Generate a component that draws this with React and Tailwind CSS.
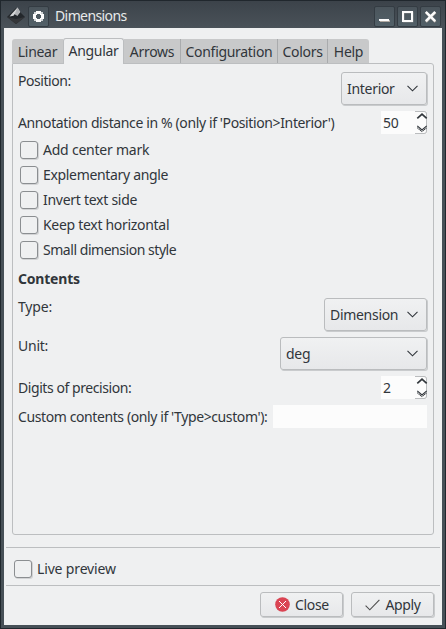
const TABS = [
  ['Linear', 'w-[51px] rounded-tl-[3px]'],
  ['Angular', 'w-[61px]'],
  ['Arrows', 'w-[57px]'],
  ['Configuration', 'w-[97px]'],
  ['Colors', 'w-[50px]'],
  ['Help', 'w-[41px] rounded-tr-[3px]'],
];

const CHECKS = [
  ['Add center mark', 'tracking-[-0.23px]'],
  ['Explementary angle', 'tracking-[-0.33px]'],
  ['Invert text side', 'tracking-[-0.27px]'],
  ['Keep text horizontal', 'tracking-[-0.3px]'],
  ['Small dimension style', 'tracking-[-0.46px]'],
];

const FACE = 'border border-[#babcbe] rounded-[3px] bg-linear-to-b from-[#f0f1f2] to-[#e7e8ea] shadow-[1px_1px_0_#c9cbcd]';

function Tabs() {
  return (
    <div className="flex h-[26px] items-end relative z-10 -mb-px tracking-[-0.3px]">
      {TABS.map(([name, cls], i) =>
        name === 'Angular' ? (
          <div key={name} className={`${cls} h-[26px] pb-px flex items-center justify-center bg-[#eff0f1] border border-b-0 border-[#bcbec0] rounded-t-[3px]`}>
            {name}
          </div>
        ) : (
          <div key={name} className={`${cls} h-[24px] mb-px pt-[2px] flex items-center justify-center bg-[#c8c9ca] ${i > 1 && i < 5 ? 'border-r border-[#a9abad]' : ''}`}>
            {name}
          </div>
        )
      )}
    </div>
  );
}

function Check({ label, tracking }) {
  return (
    <div className="flex items-center h-[19px] gap-[5px]">
      <div className="w-[18px] h-[18px] shrink-0 border border-[#8b8e91] rounded-[3px] bg-[#eff0f1] shadow-[1px_1px_0_#d2d3d5]" />
      <span className={tracking}>{label}</span>
    </div>
  );
}

function Row({ label, children, top, tracking }) {
  return (
    <div className={`flex justify-between ${top ? 'items-start' : 'items-center'}`}>
      <span className={`leading-[18px] ${tracking}`}>{label}</span>
      {children}
    </div>
  );
}

function Select({ value, width }) {
  return (
    <div className={`${width} h-[33px] pl-[5px] pr-[8px] flex items-center justify-between tracking-[-0.3px] ${FACE}`}>
      <span>{value}</span>
      <svg width="11" height="7" viewBox="0 0 11 7" fill="none" stroke="#31363b" strokeWidth="1.1">
        <path d="M.5 .8 5.5 5.8 10.5 .8" />
      </svg>
    </div>
  );
}

function Spin({ value }) {
  return (
    <div className="flex w-[46px] h-[23px] bg-[#fcfcfc]">
      <span className="w-[34px] pl-[2px] leading-[24px] tracking-[-0.2px]">{value}</span>
      <div className="w-[12px] h-[23px] border border-l-0 border-[#babcbe] rounded-r-[3px]">
        <svg className="overflow-visible" width="12" height="21" viewBox="0 0 12 21" fill="none" stroke="#31363b" strokeWidth="1.7">
          <path d="M2.3 6.4 7 2.2 11.7 6.4" />
          <path d="M2.3 13.8 7 18 11.7 13.8" strokeWidth="1.1" />
          <path d="M2.3 15.6 7 19.6 11.7 15.6" strokeWidth="1.1" strokeDasharray="1.2 .6" />
        </svg>
      </div>
    </div>
  );
}

function TitleButton({ children }) {
  return (
    <div className="w-[21px] h-[21px] border border-[#343c43] rounded-[2px] bg-linear-to-b from-[#4b555c] to-[#526068] flex items-center justify-center">
      {children}
    </div>
  );
}

function TitleBar() {
  return (
    <div className="h-[28px] border-t border-[#20272d] bg-linear-to-b from-[#3c434a] to-[#4a5259] flex items-center pt-[3px] pl-[6px] pr-[4px]">
      <svg width="18" height="18" viewBox="0 0 18 18">
        <path d="M9 1 18 10 9 17 0 10Z" fill="#23272b" />
        <path d="M0 10 9 12 18 10 9 17Z" fill="#343639" />
        <path d="M10.5 .5 5 6.5 2.6 9.6 6.5 8.8 7.8 6.9 10.3 8.8 13.2 5Z" fill="#d5d6d7" />
        <path d="M10.5 .5 7.8 6.9 10.3 8.8 13.2 5Z" fill="#b1b3b5" />
      </svg>
      <div className="ml-[3px]">
        <TitleButton>
          <svg width="13" height="13" viewBox="0 0 13 13" fill="none">
            <path d="M4 1H9V2H11V4H12V9H11V11H9V12H4V11H2V9H1V4H2V2H4ZM5 4V5H4V8H5V9H8V8H9V5H8V4Z" fill="#fcfcfc" fillRule="evenodd" />
            <path d="M2 2H4V4H2ZM9 2H11V4H9ZM2 9H4V11H2ZM9 9H11V11H9Z" fill="#d0d4d6" />
          </svg>
        </TitleButton>
      </div>
      <span className="ml-[6px] text-[#e8eaeb] leading-[18px] tracking-[-0.6px]">Dimensions</span>
      <div className="ml-auto flex gap-[2px]">
        <TitleButton>
          <svg width="13" height="13" viewBox="0 0 13 13"><path d="M2 10H12V12H2Z" fill="#b0a9a2" /><path d="M1 9H11V11H1Z" fill="#fcfcfc" /></svg>
        </TitleButton>
        <TitleButton>
          <svg width="13" height="13" viewBox="0 0 13 13" fill="none"><path d="M2.5 2.5H11.5V11.5H2.5Z" stroke="#b5b0aa" strokeWidth="1.5" /><path d="M2 2H11V11H2Z" stroke="#fcfcfc" strokeWidth="2" /></svg>
        </TitleButton>
        <TitleButton>
          <svg width="13" height="13" viewBox="0 0 13 13" fill="none"><path d="M2 2.5 11.5 12M11.5 2.5 2 12" stroke="#aaa5a0" strokeWidth="2.4" /><path d="M1.8 1.8 11.2 11.2M11.2 1.8 1.8 11.2" stroke="#fcfcfc" strokeWidth="2.5" /></svg>
        </TitleButton>
      </div>
    </div>
  );
}

export default function App() {
  return (
    <div className="w-[446px] h-[629px] flex flex-col overflow-hidden bg-[#475057] font-['Noto_Sans',sans-serif] text-[14px] leading-[18px] text-[#31363b] whitespace-nowrap border-l border-r border-b border-[#20272d]">
      <TitleBar />
      <div className="mx-[3px] mb-[3px] flex-1 bg-[#eff0f1] flex flex-col">
        <div className="pt-[10px] pl-[8px] pr-[8px]">
          <Tabs />
          <div className="h-[472px] border border-[#bcbec0] rounded-b-[3px] rounded-tr-[3px] pt-[8px] pl-[5px] pr-[6px] flex flex-col gap-[6px]">
            <Row label="Position:" top tracking="tracking-[-0.45px]"><Select value="Interior" width="w-[86px]" /></Row>
            <Row label="Annotation distance in % (only if 'Position>Interior')" tracking="tracking-[-0.38px]"><Spin value="50" /></Row>
            <div className="pl-[2px] flex flex-col gap-[6px]">
              {CHECKS.map(([label, tracking]) => <Check key={label} label={label} tracking={tracking} />)}
            </div>
            <div className="font-bold h-[27px] leading-[28px] tracking-[-0.2px]">Contents</div>
            <Row label="Type:" top tracking="tracking-[-0.15px]"><Select value="Dimension" width="w-[103px]" /></Row>
            <Row label="Unit:" top tracking="tracking-[-0.25px]"><Select value="deg" width="w-[147px]" /></Row>
            <Row label="Digits of precision:" tracking="tracking-[-0.43px]"><Spin value="2" /></Row>
            <Row label="Custom contents (only if 'Type>custom'):" tracking="tracking-[-0.4px]"><div className="w-[154px] h-[23px] bg-[#fcfcfc]" /></Row>
          </div>
        </div>
        <div className="mt-[12px] mx-[2px] border-t border-[#bcbec0]" />
        <div className="pl-[10px] pt-[11px] h-[37px]"><Check label="Live preview" tracking="tracking-[-0.15px]" /></div>
        <div className="mx-[2px] border-t border-[#bcbec0]" />
        <div className="mt-[6px] pr-[8px] flex justify-end gap-[8px] tracking-[-0.35px]">
          <div className={`w-[83px] h-[25px] pl-px flex items-center justify-center gap-[5px] ${FACE}`}>
            <svg width="15" height="15" viewBox="0 0 15 15" fill="none">
              <circle cx="7.5" cy="7.5" r="7.3" fill="#da4453" />
              <path d="M4 4 11 11M11 4 4 11" stroke="#fff" strokeWidth="1" />
            </svg>
            Close
          </div>
          <div className={`w-[83px] h-[25px] pl-px flex items-center justify-center gap-[5px] ${FACE}`}>
            <svg width="15" height="12" viewBox="0 0 15 12" fill="none" stroke="#4d4d4d" strokeWidth="1.1">
              <path d="M.6 6.6 4.8 10.8 14.4 .8" />
            </svg>
            Apply
          </div>
        </div>
      </div>
    </div>
  );
}
